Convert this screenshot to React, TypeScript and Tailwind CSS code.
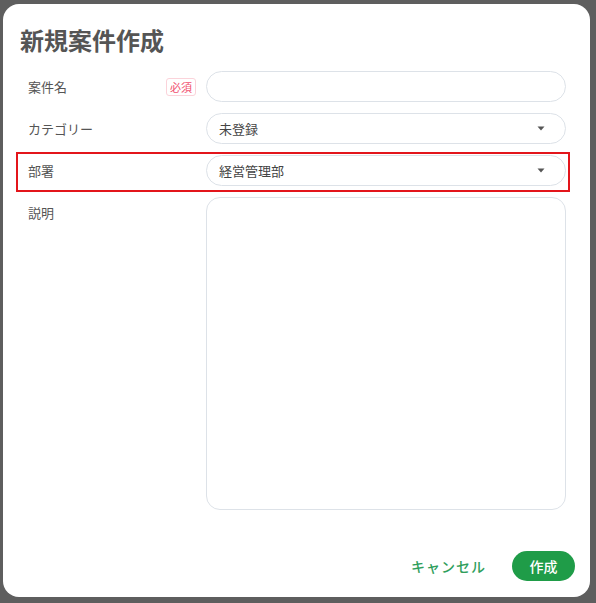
import React from 'react';

const font = { fontFamily: '"Noto Sans CJK JP", "Noto Sans", sans-serif' };

const Caret = () => (
  <svg width="8" height="5" viewBox="0 0 8 5" className="shrink-0">
    <path d="M0.5 0.5 H7.5 L4 4.5 Z" fill="#555" />
  </svg>
);

interface RowProps {
  label: string;
  required?: boolean;
  highlight?: boolean;
  top?: boolean;
  children: React.ReactNode;
}

const Row: React.FC<RowProps> = ({ label, required, highlight, top, children }) => (
  <div
    className={`flex ${top ? 'items-start' : 'items-center'} gap-[10px] border-2 pl-[10px] pr-[2px] pt-[1px] pb-[4px] ${
      highlight ? 'border-[#e3151b]' : 'border-transparent'
    }`}
  >
    <div className={`flex w-[168px] shrink-0 items-center justify-between ${top ? 'pt-[6px]' : ''}`}>
      <span className="text-[13px] text-[#555]">{label}</span>
      {required && (
        <span className="rounded-[3px] border border-[#fbd3da] px-[3px] text-[11px] leading-[16px] text-[#f0506e]">
          必須
        </span>
      )}
    </div>
    {children}
  </div>
);

const SelectBox = ({ value }: { value: string }) => (
  <div className="flex h-[31px] flex-1 items-center justify-between rounded-full border border-[#dde2e8] pl-[12px] pr-[20px]">
    <span className="text-[13px] text-[#444]">{value}</span>
    <Caret />
  </div>
);

export default function App() {
  return (
    <div className="h-[603px] w-[596px] bg-[#5e5e5e] pl-[3px] pr-[6px] pt-[4px] pb-[6px]" style={font}>
      <div className="flex h-full flex-col rounded-[16px] bg-white">
        <h1 className="mb-[12px] px-[17px] pt-[20px] text-[24px] font-bold leading-[32px] text-[#555]">
          新規案件作成
        </h1>
        <div className="flex flex-col gap-[2px] pl-[13px] pr-[20px]">
          <Row label="案件名" required>
            <div className="h-[31px] flex-1 rounded-full border border-[#dde2e8]" />
          </Row>
          <Row label="カテゴリー">
            <SelectBox value="未登録" />
          </Row>
          <Row label="部署" highlight>
            <SelectBox value="経営管理部" />
          </Row>
          <Row label="説明" top>
            <div className="h-[313px] flex-1 rounded-[14px] border border-[#dde2e8]" />
          </Row>
        </div>
        <div className="mt-auto flex items-center justify-end gap-[26px] pb-[16px] pr-[15px]">
          <button className="text-[14px] font-medium tracking-[1px] text-[#2f9e5c]">キャンセル</button>
          <button className="h-[30px] w-[63px] rounded-full bg-[#1f9c48] text-[14px] font-medium text-white">
            作成
          </button>
        </div>
      </div>
    </div>
  );
}
